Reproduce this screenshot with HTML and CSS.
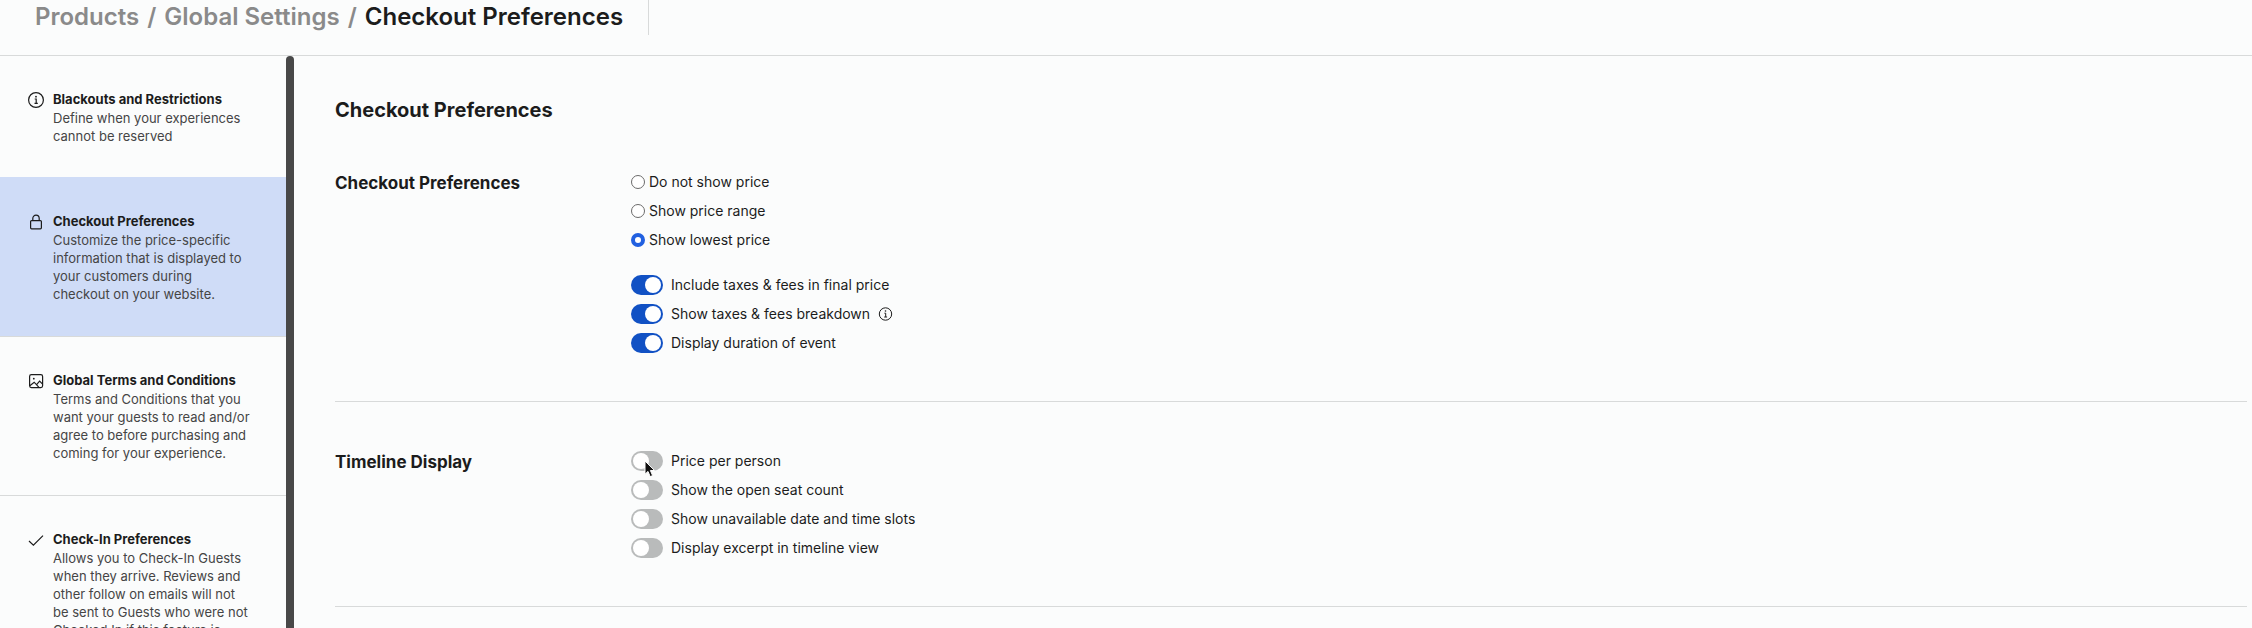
FILE: index.html
```html
<!DOCTYPE html>
<html lang="en">
<head>
    <meta charset="UTF-8">
    <meta name="viewport" content="width=device-width, initial-scale=1.0">
    <title>Checkout Preferences</title>
    <link rel="stylesheet" href="styles.css">
</head>
<body>
    <header class="topbar">
        <nav class="breadcrumb" aria-label="Breadcrumb">
            <a href="#">Products</a>
            <span>/</span>
            <a href="#">Global Settings</a>
            <span>/</span>
            <strong>Checkout Preferences</strong>
        </nav>
    </header>

    <div class="layout">
        <nav class="sidebar" aria-label="Settings">
            <a class="item" href="#">
                <svg class="icon" viewBox="0 0 16 16"><circle cx="8" cy="8" r="7.4"/><path d="M6.7 7h1.5v4.3M6.5 11.4h3.3"/><circle class="dot" cx="8" cy="4.7" r="0.9"/></svg>
                <span class="item-text">
                    <span class="item-title">Blackouts and Restrictions</span>
                    <span class="item-desc">Define when your experiences cannot be reserved</span>
                </span>
            </a>
            <a class="item selected" href="#" aria-current="page">
                <svg class="icon" viewBox="0 0 16 16"><rect x="2.6" y="6.6" width="10.8" height="8.2" rx="1"/><path d="M4.8 6.6V4.4a3.2 3.2 0 0 1 6.4 0v2.2"/></svg>
                <span class="item-text">
                    <span class="item-title">Checkout Preferences</span>
                    <span class="item-desc">Customize the price-specific information that is displayed to your customers during checkout on your website.</span>
                </span>
            </a>
            <a class="item" href="#">
                <svg class="icon" viewBox="0 0 16 16"><rect x="1.6" y="1.6" width="13" height="13" rx="1.8"/><path d="M1.8 12.8l4.4-3.6 5 5.4M8.6 11.6l3-3.4 3 3"/><circle class="dot" cx="5.8" cy="5.7" r="0.9"/></svg>
                <span class="item-text">
                    <span class="item-title">Global Terms and Conditions</span>
                    <span class="item-desc">Terms and Conditions that you want your guests to read and/or agree to before purchasing and coming for your experience.</span>
                </span>
            </a>
            <a class="item" href="#">
                <svg class="icon" viewBox="0 0 16 16"><path d="M1 9l4.4 4.2L15 3.6"/></svg>
                <span class="item-text">
                    <span class="item-title">Check-In Preferences</span>
                    <span class="item-desc">Allows you to Check-In Guests when they arrive. Reviews and other follow on emails will not be sent to Guests who were not Checked In if this feature is</span>
                </span>
            </a>
        </nav>
        <div class="scrollbar"></div>

        <main class="content">
            <h1>Checkout Preferences</h1>

            <section class="section">
                <h2>Checkout Preferences</h2>
                <div class="options">
                    <div class="group">
                        <label class="option radio"><input type="radio" name="price">Do not show price</label>
                        <label class="option radio"><input type="radio" name="price">Show price range</label>
                        <label class="option radio"><input type="radio" name="price" checked>Show lowest price</label>
                    </div>
                    <div class="group">
                        <label class="option toggle"><input type="checkbox" checked>Include taxes &amp; fees in final price</label>
                        <label class="option toggle"><input type="checkbox" checked>Show taxes &amp; fees breakdown
                            <svg class="icon" viewBox="0 0 16 16"><circle cx="7.5" cy="8" r="6.2"/><path d="M6.4 7.2h1.3v3.7M6.2 11h2.9"/><circle class="dot" cx="7.5" cy="5" r="0.8"/></svg>
                        </label>
                        <label class="option toggle"><input type="checkbox" checked>Display duration of event</label>
                    </div>
                </div>
            </section>

            <section class="section">
                <h2>Timeline Display</h2>
                <div class="options">
                    <div class="group">
                        <label class="option toggle">
                            <input type="checkbox">Price per person
                            <svg class="cursor" viewBox="0 0 12 18"><path d="M1 1v13.2l3-2.8 2.2 5.2 2.4-1-2.2-5.1h4.2z"/></svg>
                        </label>
                        <label class="option toggle"><input type="checkbox">Show the open seat count</label>
                        <label class="option toggle"><input type="checkbox">Show unavailable date and time slots</label>
                        <label class="option toggle"><input type="checkbox">Display excerpt in timeline view</label>
                    </div>
                </div>
            </section>
        </main>
    </div>
</body>
</html>
```

FILE: styles.css
```css
* {
    box-sizing: border-box;
}

body {
    margin: 0;
    height: 100vh;
    display: flex;
    flex-direction: column;
    overflow: hidden;
    background-color: #fbfcfc;
    color: #1c1c1c;
    font-family: Inter, "Liberation Sans", sans-serif;
    font-size: 14px;
    line-height: 20px;
}

/* Header */
.topbar {
    display: flex;
    padding: 0 35px 20px;
    border-bottom: 1px solid #d8dada;
}

.breadcrumb {
    display: flex;
    gap: 8px;
    height: 35px;
    padding-right: 25px;
    border-right: 1px solid #d8dada;
    font-size: 24px;
    font-weight: 600;
    line-height: 34px;
    color: #8a8a8a;
}

.breadcrumb a {
    color: inherit;
    text-decoration: none;
}

.breadcrumb strong {
    font-weight: 600;
    color: #1c1c1c;
}

.layout {
    display: flex;
    flex: 1;
    min-height: 0;
}

/* Sidebar */
.sidebar {
    flex: 0 0 286px;
    overflow: hidden;
}

.item {
    display: flex;
    gap: 9px;
    padding: 33px 34px 33px 28px;
    border-top: 1px solid #d8dada;
    color: #454545;
    text-decoration: none;
}

.item:first-child {
    padding-bottom: 32px;
    border-top: none;
}

.item.selected {
    background-color: #cfdcf7;
    border-top-color: #cfdcf7;
}

.icon {
    flex: none;
    width: 16px;
    height: 16px;
    margin-top: 3px;
    fill: none;
    stroke: #1c1c1c;
    stroke-width: 1.2;
}

.icon .dot {
    fill: #1c1c1c;
    stroke: none;
}

.item-text {
    font-size: 13px;
}

.item-title {
    display: block;
    font-weight: 700;
    color: #1c1c1c;
}

.item-desc {
    display: block;
    line-height: 18px;
}

.scrollbar {
    flex: 0 0 8px;
    border-radius: 4px 4px 0 0;
    background-color: #484848;
}

/* Content */
.content {
    flex: 1;
    min-width: 0;
    overflow: hidden;
    padding: 41px 5px 0 41px;
}

h1 {
    margin: 0;
    font-size: 20px;
    font-weight: 700;
    line-height: 26px;
}

h2 {
    margin: 0;
    flex: 0 0 296px;
    font-size: 17px;
    font-weight: 700;
    line-height: 22px;
}

.section {
    display: flex;
    padding: 49px 0 48px;
    border-bottom: 1px solid #d8dada;
}

.options {
    display: flex;
    flex-direction: column;
    gap: 25px;
}

.group {
    display: flex;
    flex-direction: column;
    gap: 9px;
}

.option {
    position: relative;
    display: flex;
    align-items: center;
    gap: 8px;
}

.option .icon {
    margin-top: 0;
    stroke-width: 1;
}

.option input {
    appearance: none;
    flex: none;
    margin: 0;
}

.option.radio {
    gap: 4px;
}

.radio input {
    width: 14px;
    height: 14px;
    border: 1px solid #6b6b6b;
    border-radius: 50%;
    background-color: #fff;
}

.radio input:checked {
    border: 4px solid #2160e0;
}

.toggle input {
    display: flex;
    width: 32px;
    height: 20px;
    padding: 2px;
    border-radius: 10px;
    background-color: #b9bbbb;
}

.toggle input::before {
    content: "";
    width: 16px;
    height: 16px;
    border-radius: 50%;
    background-color: #fff;
}

.toggle input:checked {
    justify-content: flex-end;
    background-color: #1151c4;
}

/* Mouse pointer over the first toggle */
.cursor {
    position: absolute;
    left: 13px;
    top: 9px;
    width: 12px;
    height: 18px;
    fill: #111;
    stroke: #fff;
    stroke-width: 1;
}
```
